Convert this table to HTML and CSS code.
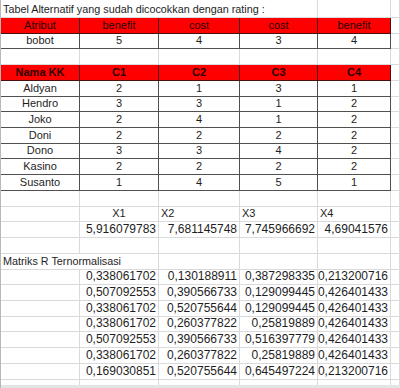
FILE: index.html
```
<!DOCTYPE html>
<html>
<head>
<meta charset="utf-8">
<link rel="stylesheet" href="styles.css">
</head>
<body>
<div class="sheet">
  <!-- row 1 -->
  <div class="c s4 txt">Tabel Alternatif yang sudah dicocokkan dengan rating :</div>
  <div class="c"></div><div class="c"></div>
  <!-- row 2 -->
  <div class="c hd ctr">Atribut</div><div class="c hd ctr">benefit</div><div class="c hd ctr">cost</div><div class="c hd ctr">cost</div><div class="c hd ctr">benefit</div><div class="c"></div>
  <!-- row 3 -->
  <div class="c tb ctr">bobot</div><div class="c tb ctr">5</div><div class="c tb ctr">4</div><div class="c tb ctr">3</div><div class="c tb ctr">4</div><div class="c"></div>
  <!-- row 4 -->
  <div class="c"></div><div class="c"></div><div class="c"></div><div class="c"></div><div class="c"></div><div class="c"></div>
  <!-- row 5 -->
  <div class="c hd ctr b">Nama KK</div><div class="c hd ctr b">C1</div><div class="c hd ctr b">C2</div><div class="c hd ctr b">C3</div><div class="c hd ctr b">C4</div><div class="c"></div>
  <!-- rows 6-12 -->
  <div class="c tb ctr">Aldyan</div><div class="c tb ctr">2</div><div class="c tb ctr">1</div><div class="c tb ctr">3</div><div class="c tb ctr">1</div><div class="c"></div>
  <div class="c tb ctr">Hendro</div><div class="c tb ctr">3</div><div class="c tb ctr">3</div><div class="c tb ctr">1</div><div class="c tb ctr">2</div><div class="c"></div>
  <div class="c tb ctr">Joko</div><div class="c tb ctr">2</div><div class="c tb ctr">4</div><div class="c tb ctr">1</div><div class="c tb ctr">2</div><div class="c"></div>
  <div class="c tb ctr">Doni</div><div class="c tb ctr">2</div><div class="c tb ctr">2</div><div class="c tb ctr">2</div><div class="c tb ctr">2</div><div class="c"></div>
  <div class="c tb ctr">Dono</div><div class="c tb ctr">3</div><div class="c tb ctr">3</div><div class="c tb ctr">4</div><div class="c tb ctr">2</div><div class="c"></div>
  <div class="c tb ctr">Kasino</div><div class="c tb ctr">2</div><div class="c tb ctr">2</div><div class="c tb ctr">2</div><div class="c tb ctr">2</div><div class="c"></div>
  <div class="c tb ctr">Susanto</div><div class="c tb ctr">1</div><div class="c tb ctr">4</div><div class="c tb ctr">5</div><div class="c tb ctr">1</div><div class="c"></div>
  <!-- row 13 -->
  <div class="c"></div><div class="c"></div><div class="c"></div><div class="c"></div><div class="c"></div><div class="c"></div>
  <!-- row 14 -->
  <div class="c"></div><div class="c ctr">X1</div><div class="c">X2</div><div class="c">X3</div><div class="c">X4</div><div class="c"></div>
  <!-- row 15 -->
  <div class="c"></div><div class="c r num">5,916079783</div><div class="c r num">7,681145748</div><div class="c r num">7,745966692</div><div class="c r num">4,69041576</div><div class="c"></div>
  <!-- row 16 -->
  <div class="c"></div><div class="c"></div><div class="c"></div><div class="c"></div><div class="c"></div><div class="c"></div>
  <!-- row 17 -->
  <div class="c s2 txt">Matriks R Ternormalisasi</div><div class="c"></div><div class="c"></div><div class="c"></div><div class="c"></div>
  <!-- rows 18-24 -->
  <div class="c"></div><div class="c r num">0,338061702</div><div class="c r num">0,130188911</div><div class="c r num">0,387298335</div><div class="c r num">0,213200716</div><div class="c"></div>
  <div class="c"></div><div class="c r num">0,507092553</div><div class="c r num">0,390566733</div><div class="c r num">0,129099445</div><div class="c r num">0,426401433</div><div class="c"></div>
  <div class="c"></div><div class="c r num">0,338061702</div><div class="c r num">0,520755644</div><div class="c r num">0,129099445</div><div class="c r num">0,426401433</div><div class="c"></div>
  <div class="c"></div><div class="c r num">0,338061702</div><div class="c r num">0,260377822</div><div class="c r num">0,25819889</div><div class="c r num">0,426401433</div><div class="c"></div>
  <div class="c"></div><div class="c r num">0,507092553</div><div class="c r num">0,390566733</div><div class="c r num">0,516397779</div><div class="c r num">0,426401433</div><div class="c"></div>
  <div class="c"></div><div class="c r num">0,338061702</div><div class="c r num">0,260377822</div><div class="c r num">0,25819889</div><div class="c r num">0,426401433</div><div class="c"></div>
  <div class="c"></div><div class="c r num">0,169030851</div><div class="c r num">0,520755644</div><div class="c r num">0,645497224</div><div class="c r num">0,213200716</div><div class="c"></div>
  <!-- row 25 partial -->
  <div class="c nb"></div><div class="c nb"></div><div class="c nb"></div><div class="c nb"></div><div class="c nb"></div><div class="c nb"></div>
  <!-- tabs strip -->
  <div class="strip"></div>
</div>
</body>
</html>
```
FILE: styles.css
```
* { box-sizing: border-box; margin: 0; padding: 0; }
html, body { background: #ffffff; }
body { width: 400px; height: 388px; overflow: hidden; }

.sheet {
  width: 400px;
  height: 388px;
  display: grid;
  grid-template-columns: 79px 79px 81px 78px 73px 1fr;
  grid-template-rows: 18px repeat(23, 15.72px) 1fr 3px;
  border-left: 1px solid #b8b8b8;
  font-family: "Liberation Sans", Arial, sans-serif;
  font-size: 11px;
  color: #1e1e1e;
  background: #ffffff;
}

.c {
  display: flex;
  align-items: flex-end;
  padding: 0 2px 1px 2px;
  line-height: 13px;
  white-space: nowrap;
  border-right: 1px solid #dadada;
  border-bottom: 1px solid #dadada;
  min-width: 0;
}

.nb { border-bottom: none; }
.s4 { grid-column: span 4; }
.s2 { grid-column: span 2; }
.txt { font-size: 10.8px; padding-left: 2px; }

.ctr { justify-content: center; }
.r { justify-content: flex-end; }
.num { font-size: 12px; }

.hd {
  background: #ff0000;
  color: #2a0000;
  border-right-color: #4a1010;
  border-bottom-color: #4a1010;
}
.b { font-weight: bold; }

.tb {
  border-right-color: #505050;
  border-bottom-color: #505050;
}

.strip {
  grid-column: 1 / -1;
  background: #e2e4e6;
}
```
